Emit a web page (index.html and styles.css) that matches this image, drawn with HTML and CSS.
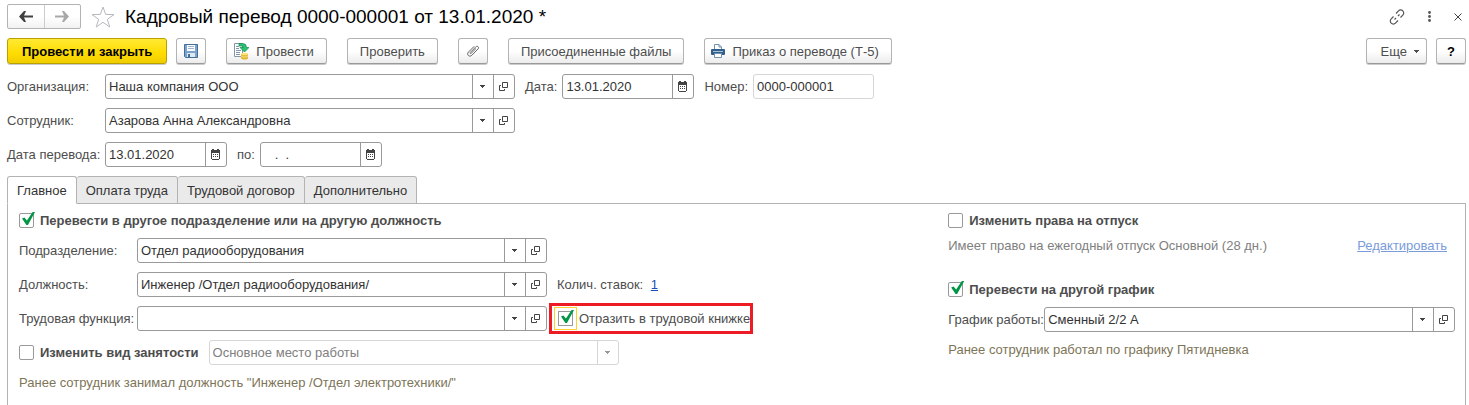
FILE: index.html
```html
<!DOCTYPE html>
<html lang="ru">
<head>
    <meta charset="UTF-8">
    <meta name="viewport" content="width=device-width, initial-scale=1.0">
    <title>Кадровый перевод</title>
    <link rel="stylesheet" href="styles.css">
</head>
<body>
    <!-- Shared icons -->
    <svg class="sprite" aria-hidden="true">
        <symbol id="caret" viewBox="0 0 5 3">
            <path d="M0 0h5v1H4v1H3v1H2V2H1V1H0z" fill="currentColor"/>
        </symbol>
        <symbol id="open" viewBox="0 0 9 9">
            <path d="M3.5.5h5v5h-5zM2 3.5H.5v5h5V7" fill="none" stroke="currentColor"/>
        </symbol>
        <symbol id="calendar" viewBox="0 0 9 11">
            <path d="M0 1h1V0h2v1h3V0h2v1h1v9H8v1H1v-1H0zM1 4v6h7V4z" fill="currentColor" fill-rule="evenodd"/>
            <path d="M2 5h1v1H2zM4 5h1v1H4zM6 5h1v1H6zM2 7h1v1H2zM4 7h1v1H4zM6 7h1v1H6z" fill="currentColor"/>
        </symbol>
    </svg>

    <header class="titlebar">
        <div class="nav">
            <button type="button" aria-label="Назад">
                <svg width="14" height="11" viewBox="0 0 14 11"><path d="M0 5.5L5 0h2L5 4.500h9v2H5L7 11H5z" fill="#404040"/></svg>
            </button>
            <button type="button" aria-label="Вперед">
                <svg width="14" height="11" viewBox="0 0 14 11"><path d="M14 5.5L9 0H7l2 4.500H0v2h9L7 11h2z" fill="#a8a8a8"/></svg>
            </button>
        </div>
        <button type="button" class="icon-btn star" aria-label="Избранное">
            <svg width="24" height="22" viewBox="0 0 24 22"><path d="M12 1l2.700 7.400 8.300.2-6.700 4.700 2.500 7.700-6.800-4.700L5.200 21l2.500-7.700L1 8.600l8.300-.2z" fill="none" stroke="#b5b9be"/></svg>
        </button>
        <h1>Кадровый перевод 0000-000001 от 13.01.2020 *</h1>
        <div class="window-actions">
            <button type="button" class="icon-btn" aria-label="Получить ссылку">
                <svg width="16" height="16" viewBox="0 0 16 16" fill="none" stroke="#555" stroke-width="1.2">
                    <path d="M7 4.500l2.500-2.600a2.900 2.900 0 0 1 4.300 0 2.900 2.900 0 0 1 0 4.200L11.500 8.500M9 11.500l-2.500 2.600a2.900 2.900 0 0 1-4.300 0 2.900 2.900 0 0 1 0-4.200L4.500 7.500M5.500 10.500L7 9M9 7l1.500-1.500"/>
                </svg>
            </button>
            <button type="button" class="icon-btn" aria-label="Меню">
                <svg width="3" height="11" viewBox="0 0 3 11" fill="#555"><circle cx="1.500" cy="1.500" r="1.400"/><circle cx="1.500" cy="5.500" r="1.400"/><circle cx="1.500" cy="9.500" r="1.400"/></svg>
            </button>
            <button type="button" class="icon-btn" aria-label="Закрыть">
                <svg width="8" height="8" viewBox="0 0 8 8"><path d="M.5.5l7 7M7.5.5l-7 7" stroke="#444"/></svg>
            </button>
        </div>
    </header>

    <div class="toolbar">
        <div class="group">
            <button type="button" class="btn primary">Провести и закрыть</button>
            <button type="button" class="btn square" aria-label="Записать">
                <svg width="16" height="16" viewBox="0 0 16 16">
                    <path d="M1.500 1.500h13v13h-12l-1-1z" fill="#7ba3cc" stroke="#456f9b"/>
                    <path d="M4 2h8v6H4z" fill="#fff"/>
                    <path d="M5 3.500h6M5 5.500h6" stroke="#9db4cc"/>
                    <path d="M4 10h8v4H4z" fill="#dfe9f3"/>
                    <path d="M5 11h2v3H5z" fill="#456f9b"/>
                </svg>
            </button>
        </div>
        <button type="button" class="btn post">
            <svg width="16" height="18" viewBox="0 0 16 18">
                <path d="M1.500 1.500h8v13h-8z" fill="#fff" stroke="#8496a8"/>
                <path d="M3 4.500h3M3 6.500h3M3 8.500h5M3 10.500h4M3 12.500h4" stroke="#8496a8"/>
                <path d="M6 1.500h3.500q4 0 4 4H16L11.500 10 7 5.500h3.500q0-1.500-1.500-1.500H6z" fill="#2cc275" stroke="#118a49" stroke-width=".7"/>
                <path d="M8 12v4c0 2 7 2 7 0v-4z" fill="#e5b32d"/>
                <ellipse cx="11.500" cy="12" rx="3.500" ry="1.300" fill="#ffe27a"/>
                <path d="M8 14c1 1.400 6 1.400 7 0" fill="none" stroke="#fff0a8" stroke-width=".8"/>
            </svg>
            Провести
        </button>
        <button type="button" class="btn">Проверить</button>
        <button type="button" class="btn square" aria-label="Файлы">
            <svg width="14" height="14" viewBox="0 0 14 14"><path d="M10 4.500L5.200 9.300c-.7.700-1.600-.2-.9-.9L9.900 2.800c1.500-1.500 3.700.6 2.200 2.100l-6.300 6.400c-2.500 2.300-5.600-.7-3.400-3.200L8.200 2.300" fill="none" stroke="#666"/></svg>
        </button>
        <button type="button" class="btn">Присоединенные файлы</button>
        <button type="button" class="btn print">
            <svg width="14" height="14" viewBox="0 0 14 14">
                <path d="M3.500 5V.5H8L10.500 3v2" fill="#fff" stroke="#7390ad"/>
                <path d="M8 .5V3h2.500" fill="none" stroke="#7390ad"/>
                <path d="M1 5h12q1 0 1 1v4q0 1-1 1H1q-1 0-1-1V6q0-1 1-1z" fill="#315f8c"/>
                <path d="M2 7.500h10" stroke="#a8c2da"/>
                <path d="M3.500 9.500h7v4h-7z" fill="#fff" stroke="#7390ad"/>
            </svg>
            Приказ о переводе (Т-5)
        </button>
        <div class="group right">
            <button type="button" class="btn more">Еще <svg width="5" height="3"><use href="#caret"/></svg></button>
            <button type="button" class="btn square help">?</button>
        </div>
    </div>

    <form class="form">
        <div class="row">
            <label class="caption" for="org">Организация:</label>
            <div class="field wide">
                <input type="text" id="org" value="Наша компания ООО">
                <button type="button" aria-label="Выбрать"><svg width="5" height="3"><use href="#caret"/></svg></button>
                <button type="button" aria-label="Открыть"><svg width="9" height="9"><use href="#open"/></svg></button>
            </div>
            <label class="short" for="date">Дата:</label>
            <div class="field date">
                <input type="text" id="date" value="13.01.2020">
                <button type="button" aria-label="Календарь"><svg width="9" height="11"><use href="#calendar"/></svg></button>
            </div>
            <label class="short" for="number">Номер:</label>
            <div class="field muted number">
                <input type="text" id="number" value="0000-000001" readonly>
            </div>
        </div>
        <div class="row">
            <label class="caption" for="employee">Сотрудник:</label>
            <div class="field wide">
                <input type="text" id="employee" value="Азарова Анна Александровна">
                <button type="button" aria-label="Выбрать"><svg width="5" height="3"><use href="#caret"/></svg></button>
                <button type="button" aria-label="Открыть"><svg width="9" height="9"><use href="#open"/></svg></button>
            </div>
        </div>
        <div class="row">
            <label class="caption" for="from">Дата перевода:</label>
            <div class="field period">
                <input type="text" id="from" value="13.01.2020">
                <button type="button" aria-label="Календарь"><svg width="9" height="11"><use href="#calendar"/></svg></button>
            </div>
            <label class="short" for="to">по:</label>
            <div class="field period">
                <input type="text" id="to" value="&nbsp;&nbsp; .&nbsp; .">
                <button type="button" aria-label="Календарь"><svg width="9" height="11"><use href="#calendar"/></svg></button>
            </div>
        </div>

        <div class="tabs" role="tablist">
            <button type="button" role="tab" class="tab active" aria-selected="true">Главное</button>
            <button type="button" role="tab" class="tab">Оплата труда</button>
            <button type="button" role="tab" class="tab">Трудовой договор</button>
            <button type="button" role="tab" class="tab">Дополнительно</button>
        </div>

        <div class="panel" role="tabpanel">
            <div class="column">
                <label class="check bold"><input type="checkbox" checked>Перевести в другое подразделение или на другую должность</label>
                <div class="row">
                    <label class="caption" for="department">Подразделение:</label>
                    <div class="field wide">
                        <input type="text" id="department" value="Отдел радиооборудования">
                        <button type="button" aria-label="Выбрать"><svg width="5" height="3"><use href="#caret"/></svg></button>
                        <button type="button" aria-label="Открыть"><svg width="9" height="9"><use href="#open"/></svg></button>
                    </div>
                </div>
                <div class="row">
                    <label class="caption" for="position">Должность:</label>
                    <div class="field wide">
                        <input type="text" id="position" value="Инженер /Отдел радиооборудования/">
                        <button type="button" aria-label="Выбрать"><svg width="5" height="3"><use href="#caret"/></svg></button>
                        <button type="button" aria-label="Открыть"><svg width="9" height="9"><use href="#open"/></svg></button>
                    </div>
                    <span class="rate">Колич. ставок: <a href="#">1</a></span>
                </div>
                <div class="row">
                    <label class="caption" for="function">Трудовая функция:</label>
                    <div class="field wide">
                        <input type="text" id="function">
                        <button type="button" aria-label="Выбрать"><svg width="5" height="3"><use href="#caret"/></svg></button>
                        <button type="button" aria-label="Открыть"><svg width="9" height="9"><use href="#open"/></svg></button>
                    </div>
                    <label class="check marked"><input type="checkbox" checked>Отразить в трудовой книжке</label>
                </div>
                <div class="row">
                    <label class="check bold"><input type="checkbox">Изменить вид занятости</label>
                    <div class="field wide muted">
                        <select aria-label="Вид занятости" disabled>
                            <option>Основное место работы</option>
                        </select>
                        <span class="arrow"><svg width="5" height="3"><use href="#caret"/></svg></span>
                    </div>
                </div>
                <p class="note">Ранее сотрудник занимал должность "Инженер /Отдел электротехники/"</p>
            </div>

            <div class="column">
                <label class="check bold"><input type="checkbox">Изменить права на отпуск</label>
                <div class="vacation">
                    <span>Имеет право на ежегодный отпуск Основной (28 дн.)</span>
                    <a href="#">Редактировать</a>
                </div>
                <label class="check bold"><input type="checkbox" checked>Перевести на другой график</label>
                <div class="row">
                    <label class="caption schedule-caption" for="schedule">График работы:</label>
                    <div class="field grow">
                        <input type="text" id="schedule" value="Сменный 2/2 А">
                        <button type="button" aria-label="Выбрать"><svg width="5" height="3"><use href="#caret"/></svg></button>
                        <button type="button" aria-label="Открыть"><svg width="9" height="9"><use href="#open"/></svg></button>
                    </div>
                </div>
                <p class="note">Ранее сотрудник работал по графику Пятидневка</p>
            </div>
        </div>
    </form>
</body>
</html>
```
FILE: styles.css
```css
* {
    margin: 0;
    padding: 0;
    box-sizing: border-box;
}

body {
    font-family: "Liberation Sans", Arial, sans-serif;
    font-size: 13px;
    line-height: 15px;
    color: #4d4d4d;
    background: #fff;
    min-height: 100vh;
    display: flex;
    flex-direction: column;
    padding: 4px 3px 0 7px;
}

button,
input,
select {
    font: inherit;
    color: inherit;
}

button {
    cursor: pointer;
}

svg {
    display: block;
    flex: none;
}

.sprite {
    position: absolute;
    width: 0;
    height: 0;
}

/* Title bar */
.titlebar {
    display: flex;
    align-items: center;
    height: 25px;
}

.nav {
    display: flex;
    width: 74px;
    height: 25px;
    border: 1px solid #b3b3b3;
    border-radius: 2px;
    background: linear-gradient(#fff 50%, #f2f2f2);
}

.nav button {
    flex: 1;
    display: flex;
    align-items: center;
    justify-content: center;
    border: none;
    background: none;
}

.nav button + button {
    border-left: 1px solid #ccc;
}

.icon-btn {
    display: flex;
    border: none;
    background: none;
}

.star {
    margin: 0 10px;
}

h1 {
    font-size: 19px;
    line-height: 22px;
    font-weight: normal;
    color: #000;
}

.window-actions {
    display: flex;
    align-items: center;
    gap: 23px;
    margin-left: auto;
    padding-right: 4px;
}

/* Toolbar */
.toolbar {
    display: flex;
    gap: 20px;
    margin-top: 9px;
}

.group {
    display: flex;
    gap: 9px;
}

.right {
    margin-left: auto;
}

.btn {
    display: flex;
    align-items: center;
    justify-content: center;
    height: 26px;
    padding: 0 12px;
    border: 1px solid #b3b3b3;
    border-bottom-color: #999;
    border-radius: 3px;
    background: linear-gradient(#fff 50%, #ececec);
    box-shadow: 0 1px 0 #ccc;
    white-space: nowrap;
}

.primary {
    padding: 0 14px;
    border-color: #b9a000;
    background: linear-gradient(#ffe934, #ffdc00 60%, #efcd00);
    color: #000;
    font-weight: bold;
}

.square {
    width: 30px;
    padding: 0;
}

.post,
.print {
    gap: 7px;
    padding: 0 12px 0 6px;
}

.more {
    gap: 7px;
    padding: 0 7px 0 14px;
}

.help {
    color: #000;
    font-weight: bold;
}

/* Form */
.form {
    flex: 1;
    display: flex;
    flex-direction: column;
    gap: 9px;
    margin-top: 10px;
}

.row {
    display: flex;
    align-items: center;
    gap: 10px;
}

.caption {
    width: 98px;
    margin-right: -10px;
    white-space: nowrap;
}

.short {
    margin-right: -5px;
}

.field {
    position: relative;
    display: flex;
    height: 25px;
    border: 1px solid #999;
    border-radius: 3px;
    background: #fff;
    color: #333;
}

.wide {
    width: 410px;
}

.date {
    width: 132px;
}

.period {
    width: 122px;
}

.number {
    width: 121px;
}

.grow {
    flex: 1;
}

.muted {
    border-color: #d6d6d6;
}

.field input,
.field select {
    flex: 1;
    min-width: 0;
    padding: 0 3px;
    border: none;
    outline: none;
    background: none;
    appearance: none;
}

.field select {
    color: #808080;
    opacity: 1;
}

.field button,
.arrow {
    display: flex;
    align-items: center;
    justify-content: center;
    width: 21px;
    padding-right: 1px;
    border: none;
    border-left: 1px solid #999;
    background: none;
    color: #444;
}

.arrow {
    position: absolute;
    top: 0;
    right: 0;
    bottom: 0;
    border-color: #d6d6d6;
    color: #999;
    pointer-events: none;
}

/* Tabs */
.tabs {
    display: flex;
    height: 28px;
    z-index: 1;
}

.tab {
    padding: 0 9px;
    border: 1px solid #b3b3b3;
    border-left: none;
    border-radius: 3px 3px 0 0;
    background: #eaeaea;
    color: #333;
}

.tab.active {
    border-left: 1px solid #b3b3b3;
    border-bottom-color: #fff;
    background: #fff;
}

.panel {
    flex: 1;
    display: grid;
    grid-template-columns: 11fr 6fr;
    margin-top: -10px;
    padding: 9px 10px 0 11px;
    border: 1px solid #b3b3b3;
    border-bottom: none;
}

.column {
    display: flex;
    flex-direction: column;
    gap: 9px;
}

.panel .caption {
    width: 118px;
}

.panel .schedule-caption {
    width: 96px;
}

.check {
    display: flex;
    align-items: center;
    gap: 6px;
    white-space: nowrap;
}

.check input {
    position: relative;
    width: 15px;
    height: 15px;
    border: 1px solid #999;
    border-radius: 2px;
    background: #fff;
    appearance: none;
}

.check input:checked::after {
    content: "";
    position: absolute;
    left: 2px;
    top: -2px;
    width: 13px;
    height: 13px;
    background: #009646;
    clip-path: polygon(0 50%, 18% 42%, 38% 66%, 82% 0, 100% 0, 46% 100%, 34% 100%);
}

.bold {
    font-weight: bold;
}

.column > .check {
    margin-bottom: 1px;
}

/* Red frame around the option */
.marked {
    height: 25px;
    margin-left: -5px;
    padding-left: 6px;
    outline: 3px solid #ed1c24;
}

.marked input {
    border-radius: 0;
    box-shadow: 0 0 0 3px #fff, 0 0 0 4px #ffcf2e;
}

.rate a {
    margin-left: 4px;
    color: #1a4fb5;
}

.note {
    padding-top: 1px;
    color: #7d7558;
}

.vacation {
    display: flex;
    justify-content: space-between;
    height: 35px;
    padding-right: 8px;
    color: #808080;
}

.vacation a {
    color: #7a9cdb;
}
```
